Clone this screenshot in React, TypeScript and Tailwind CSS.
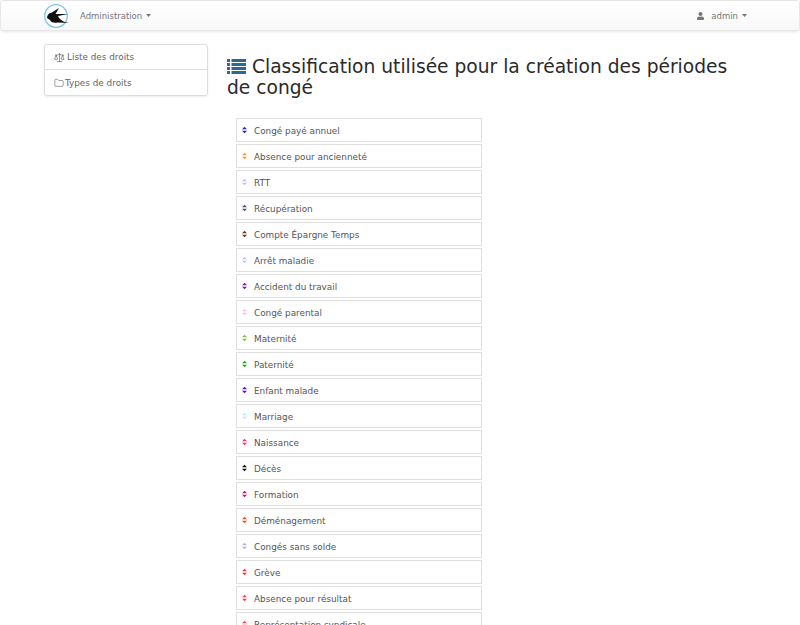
import { Folder, Scale } from "lucide-react";
import { FaUser } from "react-icons/fa";

const rows = [
  { label: "Congé payé annuel", color: "#2a2a9c" },
  { label: "Absence pour ancienneté", color: "#f39a2e" },
  { label: "RTT", color: "#c3c3ee" },
  { label: "Récupération", color: "#55555f" },
  { label: "Compte Épargne Temps", color: "#5c3a32" },
  { label: "Arrêt maladie", color: "#c2c6ee" },
  { label: "Accident du travail", color: "#7a1f9c" },
  { label: "Congé parental", color: "#eec2ee" },
  { label: "Maternité", color: "#7fc241" },
  { label: "Paternité", color: "#2ca02c" },
  { label: "Enfant malade", color: "#5c1a9c" },
  { label: "Marriage", color: "#b5eeee" },
  { label: "Naissance", color: "#f5347f" },
  { label: "Décès", color: "#111111" },
  { label: "Formation", color: "#c2185b" },
  { label: "Déménagement", color: "#e8501f" },
  { label: "Congés sans solde", color: "#b5b5bb" },
  { label: "Grève", color: "#f03c3c" },
  { label: "Absence pour résultat", color: "#f04848" },
  { label: "Représentation syndicale", color: "#f04860" },
];

function Logo() {
  return (
    <svg viewBox="0 0 27 26" className="w-[27px] h-[26px]">
      <circle cx="13" cy="13" r="11.3" fill="#fff" stroke="#7cc4e8" strokeWidth="1.3" />
      <path
        d="M4 15 C4 12 6 10 8 10 L16 5 L12.5 11 L25 11 L15 13 C16 16 20 19 26 20 L15 19.5 C12 20 8 20 7 17 C6 16 5 16 4 15 Z"
        fill="#111"
      />
    </svg>
  );
}

function Caret() {
  return (
    <svg viewBox="0 0 7 4" className="ml-[4px] w-[5px] h-[3px]">
      <path d="M0 0 H7 L3.5 4 Z" fill="currentColor" />
    </svg>
  );
}

function SortIcon({ color }: { color: string }) {
  return (
    <svg viewBox="0 0 6 8" className="w-[5px] h-[8px] mr-[7px] shrink-0">
      <path d="M3 0 L6 3 H0 Z M0 5 H6 L3 8 Z" fill={color} />
    </svg>
  );
}

function ListIcon() {
  return (
    <svg viewBox="0 0 19 15" className="inline-block w-[19px] h-[15px] mr-[6px] align-[-1px]">
      <path
        d="M0 0 H3 V3 H0 Z M4.5 0 H19 V3 H4.5 Z M0 4 H3 V7 H0 Z M4.5 4 H19 V7 H4.5 Z M0 8 H3 V11 H0 Z M4.5 8 H19 V11 H4.5 Z M0 12 H3 V15 H0 Z M4.5 12 H19 V15 H4.5 Z"
        fill="#2a6a94"
      />
    </svg>
  );
}

export default function App() {
  return (
    <div className="h-[625px] overflow-hidden bg-white font-['DejaVu_Sans',sans-serif] text-[8.85px] text-[#555]">
      {/* Navbar */}
      <nav className="h-[31px] flex items-center justify-between pl-[42px] pr-[52px] border border-[#e7e7e7] rounded-[3px] bg-gradient-to-b from-white to-[#f8f8f8] shadow-[0_1px_3px_rgba(0,0,0,0.1)] text-[8.5px]">
        <div className="flex items-center">
          <Logo />
          <span className="ml-[10px] pt-[2px] text-[#777]">Administration</span>
          <span className="text-[#777]"><Caret /></span>
        </div>
        <div className="flex items-center text-[#777]">
          <FaUser className="w-[7px] h-[8px]" />
          <span className="ml-[7px] pt-[2px]">admin</span>
          <span className="text-[#777]"><Caret /></span>
        </div>
      </nav>

      <div className="flex pl-[44px] pt-[13px]">
        {/* Sidebar */}
        <aside className="w-[164px] h-[52px] shrink-0 mr-[19px] border border-[#ddd] rounded-[3px] shadow-[0_1px_2px_rgba(0,0,0,0.08)] text-[#666]">
          <div className="h-[25px] flex items-center pl-[9px] border-b border-[#ddd]">
            <Scale className="w-[11px] h-[11px] mr-[2px]" strokeWidth={1.5} />
            <span className="pt-[2px]">Liste des droits</span>
          </div>
          <div className="h-[25px] flex items-center pl-[9px]">
            <Folder className="w-[10px] h-[10px] mr-[1px]" strokeWidth={1.5} />
            <span className="pt-[2px]">Types de droits</span>
          </div>
        </aside>

        {/* Main */}
        <main className="w-[510px]">
          <h1 className="mt-[12px] text-[18.65px] leading-[21px] text-[#2a2a2a]">
            <ListIcon />
            Classification utilisée pour la création des périodes de congé
          </h1>
          <ul className="mt-[20px] ml-[9px] w-[246px] flex flex-col gap-[2px]">
            {rows.map((row) => (
              <li
                key={row.label}
                className="h-[24px] shrink-0 flex items-center pl-[5px] border border-[#e0e0e0] text-[#555]"
              >
                <SortIcon color={row.color} />
                <span className="pt-[3px]">{row.label}</span>
              </li>
            ))}
          </ul>
        </main>
      </div>
    </div>
  );
}
